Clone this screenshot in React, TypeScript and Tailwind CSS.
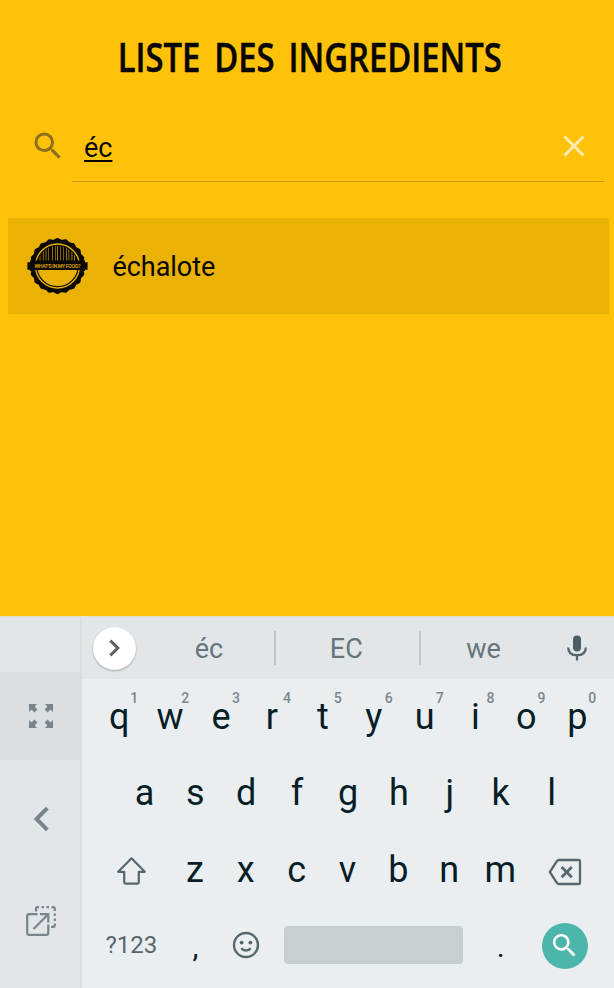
import React from "react";

const ROBOTO = "font-['Roboto','Liberation_Sans',sans-serif]";

const topRow = [
  ["q", "1"], ["w", "2"], ["e", "3"], ["r", "4"], ["t", "5"],
  ["y", "6"], ["u", "7"], ["i", "8"], ["o", "9"], ["p", "0"],
];
const middleRow = ["a", "s", "d", "f", "g", "h", "j", "k", "l"];
const bottomRow = ["z", "x", "c", "v", "b", "n", "m"];

// Scalloped edge of the badge, as alternating bumps round a circle.
function scallops(cx: number, cy: number, inner: number, outer: number, count: number) {
  const steps = count * 8;
  const points: string[] = [];
  for (let i = 0; i < steps; i++) {
    const angle = (i / steps) * Math.PI * 2 - Math.PI / 2;
    const wave = (Math.cos((i / 8) * Math.PI * 2) + 1) / 2;
    const r = inner + (outer - inner) * wave;
    points.push(`${(cx + r * Math.cos(angle)).toFixed(2)},${(cy + r * Math.sin(angle)).toFixed(2)}`);
  }
  return points.join(" ");
}

const bars: [number, number][] = [
  [9.5, 3.2], [13.3, 2.6], [16.5, 2.2], [19.3, 2.2], [22, 3.4], [26, 2], [28.5, 1.8],
  [31, 2], [33.5, 3], [37, 2.2], [39.8, 1.8], [42.2, 2.4], [45.3, 2], [48, 3.5],
];

function Badge() {
  return (
    <svg className="h-[60px] w-[62px] shrink-0" viewBox="0 0 62 60">
      <defs>
        <clipPath id="dome">
          <circle cx="30.5" cy="30" r="20.6" />
        </clipPath>
      </defs>
      <polygon points={scallops(30.5, 30, 26.6, 28, 20)} fill="#0a0800" />
      <circle cx="30.5" cy="30" r="22.7" fill="#e9b204" />
      <g clipPath="url(#dome)">
        {bars.map(([x, w]) => (
          <rect key={x} x={x} y="9" width={w} height="18" fill="#0a0800" />
        ))}
      </g>
      <circle cx="30.5" cy="30" r="20.7" fill="none" stroke="#0a0800" strokeWidth="1.2" />
      <path d="M0.4 26.3H3V24.5H58V26.3H60.6V33.8H58V35H55V34H6V35H3V33.8H0.4Z" fill="#0a0800" />
      <text
        x="30.5"
        y="31.8"
        textAnchor="middle"
        textLength="46"
        lengthAdjust="spacing"
        fontSize="5.2"
        fontWeight="500"
        fill="#e9b204"
        className={ROBOTO}
      >
        WHAT'S IN MY FOOD?
      </text>
    </svg>
  );
}

const SEARCH =
  "M15.5 14h-.79l-.28-.27A6.471 6.471 0 0 0 16 9.5 6.5 6.5 0 1 0 9.5 16c1.61 0 3.09-.59 4.23-1.57l.27.28v.79l5 4.99L20.49 19l-4.99-5zm-6 0C7.01 14 5 11.99 5 9.5S7.01 5 9.5 5 14 7.01 14 9.5 11.99 14 9.5 14z";

function Letter({ char, hint }: { char: string; hint?: string }) {
  return (
    <div className="relative flex h-full w-[50.9px] shrink-0 justify-center pt-[17px] text-[36px] leading-[42px] text-[#071e27]">
      {char}
      {hint && (
        <span className="absolute top-[11px] left-[36.5px] text-[14px] leading-[16px] font-medium text-[#7b878c]">
          {hint}
        </span>
      )}
    </div>
  );
}

function SideRail() {
  return (
    <aside className="flex w-[82px] shrink-0 flex-col border-r-2 border-[#d9dde0] bg-[#e2e6e9]">
      <div className="h-[55px]" />
      <div className="flex h-[88px] items-center justify-center bg-[#dbdfe2] pl-[2px]">
        <svg className="h-[24px] w-[24px]" viewBox="0 0 24 24" fill="#78868b">
          {["", "rotate(90 12 12)", "rotate(180 12 12)", "rotate(270 12 12)"].map((t) => (
            <path key={t} transform={t} d="M0 0H8L5.6 2.6L8.4 5.4L5.4 8.4L2.6 5.6L0 8Z" />
          ))}
        </svg>
      </div>
      <div className="flex h-[118px] items-center justify-center pl-[2px]">
        <svg className="h-[26px] w-[18px]" viewBox="0 0 18 26" fill="none" stroke="#78868b" strokeWidth="4">
          <path d="M15.3 2.2L4.5 13L15.3 23.8" />
        </svg>
      </div>
      <div className="flex h-[85px] items-center justify-center pl-[2px]">
        <svg className="h-[30px] w-[30px]" viewBox="0 0 30 30" fill="none" stroke="#78868b" strokeWidth="2.2">
          <path d="M11.5 8.2H3Q1.2 8.2 1.2 10V27Q1.2 28.9 3 28.9H20.5Q22.3 28.9 22.3 27V18.5" />
          <path d="M14 8.2H22.3V16.5M22 8.5L7.5 23" />
          <path d="M10 5.5V3Q10 1.2 11.5 1.2H13M15.5 1.2H18M20.5 1.2H23M25.5 1.2H27Q28.8 1.2 28.8 3V5M28.8 7.5V10M28.8 12.5V15M28.8 17.5V19Q28.8 20.8 27 20.8H25" />
        </svg>
      </div>
    </aside>
  );
}

function Suggestions() {
  return (
    <div className="flex h-[62px] shrink-0 items-center bg-[#e2e6e9] pl-[11px] text-[27px] leading-[32px] text-[#66757b]">
      <div className="flex h-[43px] w-[43px] shrink-0 items-center justify-center rounded-full bg-white shadow-[0_1px_2px_rgba(0,0,0,0.3)]">
        <svg className="h-[18px] w-[12px]" viewBox="0 0 12 18" fill="none" stroke="#616161" strokeWidth="3">
          <path d="M1.3 1.6L8.8 9L1.3 16.4" />
        </svg>
      </div>
      <div className="w-[138px] shrink-0 pt-[1px] pl-[8px] text-center">éc</div>
      <div className="h-[34px] w-[1.5px] shrink-0 bg-[#c2c8ca]" />
      <div className="w-[143.5px] shrink-0 pt-[1px] pr-[2px] text-center">EC</div>
      <div className="h-[34px] w-[1.5px] shrink-0 bg-[#c2c8ca]" />
      <div className="w-[126px] shrink-0 pt-[1px] text-center">we</div>
      <svg className="ml-[20.5px] h-[26px] w-[20px] shrink-0" viewBox="0 0 20 26">
        <rect x="6" y="0.5" width="8" height="16" rx="4" fill="#4b5d65" />
        <path d="M1.2 12.4C1.2 17.8 5 20.2 10 20.2S18.8 17.8 18.8 12.4M10 20V25.5" fill="none" stroke="#56676e" strokeWidth="2.3" />
      </svg>
    </div>
  );
}

function Keyboard() {
  return (
    <section className="flex h-[372px] shrink-0 border-t border-[#e4e3cd] bg-[#ebeef1]">
      <SideRail />
      <div className="flex min-w-0 flex-1 flex-col">
        <Suggestions />
        <div className="flex h-[76px] shrink-0 pl-[11.8px]">
          {topRow.map(([char, hint]) => (
            <Letter key={char} char={char} hint={hint} />
          ))}
        </div>
        <div className="flex h-[77px] shrink-0 pl-[37px]">
          {middleRow.map((char) => (
            <Letter key={char} char={char} />
          ))}
        </div>
        <div className="flex h-[76.5px] shrink-0">
          <div className="flex w-[87.4px] shrink-0 pt-[24px] pl-[34px]">
            <svg className="h-[30px] w-[31px]" viewBox="0 0 31 30" fill="none" stroke="#56676e" strokeWidth="2.2" strokeLinejoin="round">
              <path d="M15.5 2.3L28.8 15.8H22.8V26.3Q22.8 27.6 21.5 27.6H9.5Q8.2 27.6 8.2 26.3V15.8H2.2Z" />
            </svg>
          </div>
          {bottomRow.map((char) => (
            <Letter key={char} char={char} />
          ))}
          <div className="flex pt-[26px] pl-[22.6px]">
            <svg className="h-[28px] w-[34px] shrink-0" viewBox="0 0 34 28" fill="none" stroke="#56676e" strokeWidth="2.3">
              <path d="M11 2H30.5Q32 2 32 3.5V24.5Q32 26 30.5 26H11Q9.6 26 8.9 24.9L1.8 14L8.9 3.1Q9.6 2 11 2Z" />
              <path d="M13.6 9L23.8 19.2M23.8 9L13.6 19.2" strokeWidth="2.8" />
            </svg>
          </div>
        </div>
        <div className="flex min-h-0 flex-1 text-[#56676e]">
          <div className="w-[88px] shrink-0 pt-[22px] pl-[23.5px] text-[24px] leading-[28px]">?123</div>
          <div className="w-[50.8px] shrink-0 pt-[20px] text-center text-[30px] leading-[36px] text-[#071e27]">,</div>
          <div className="w-[63px] shrink-0 pt-[22px] pl-[11px]">
            <svg className="h-[28px] w-[28px]" viewBox="0 0 28 28">
              <circle cx="14" cy="14" r="12" fill="none" stroke="#56676e" strokeWidth="2.4" />
              <circle cx="9.6" cy="11.6" r="1.9" fill="#56676e" />
              <circle cx="18.4" cy="11.6" r="1.9" fill="#56676e" />
              <path d="M9.3 17.2Q11 19.5 14 19.5T18.7 17.2" fill="none" stroke="#56676e" strokeWidth="2.3" />
            </svg>
          </div>
          <div className="mt-[17px] h-[38px] w-[179px] shrink-0 rounded-[4px] bg-[#c9ced1]" />
          <div className="w-[76px] shrink-0 pt-[20px] text-center text-[30px] leading-[36px] text-[#071e27]">.</div>
          <div className="mt-[14px] ml-[3px] flex h-[46px] w-[46px] shrink-0 items-center justify-center rounded-full bg-[#4db6ac]">
            <svg className="h-[31px] w-[31px]" viewBox="0 0 24 24" fill="white">
              <path d={SEARCH} />
            </svg>
          </div>
        </div>
      </div>
    </section>
  );
}

export default function App() {
  return (
    <div className={`flex h-[988px] w-[614px] flex-col overflow-hidden bg-[#ffc20a] ${ROBOTO}`}>
      <h1 className="h-[112px] pt-[29px] text-center font-['Open_Sans','Noto_Sans',sans-serif] text-[40px] leading-[56px] font-semibold whitespace-nowrap text-[#080600]">
        <span className="inline-block origin-center translate-x-[2.5px] scale-x-[0.82] [word-spacing:6.5px] [-webkit-text-stroke:0.5px_#080600]">LISTE DES INGREDIENTS</span>
      </h1>
      <div className="flex h-[70px] shrink-0 pr-[10px] pl-[30px]">
        <svg className="mt-[16px] h-[36px] w-[36px] shrink-0" viewBox="0 0 24 24" fill="#8d701c">
          <path d={SEARCH} />
        </svg>
        <div className="ml-[6px] flex flex-1 justify-between border-b border-[#c99b0c] pl-[12px]">
          <div className="pt-[19.5px] text-[27px] leading-[32px] text-[#080600]">
            <span className="underline decoration-[1.6px] underline-offset-[2.6px] [text-decoration-skip-ink:none]">éc</span>
          </div>
          <svg className="mt-[23px] mr-[19px] h-[22px] w-[22px]" viewBox="0 0 22 22" stroke="#ffeab0" strokeWidth="3">
            <path d="M1.5 1.5L20.5 20.5M20.5 1.5L1.5 20.5" />
          </svg>
        </div>
      </div>
      <div className="mt-[36px] mr-[5.5px] ml-[7.5px] flex h-[96px] shrink-0 items-center bg-[#e9b204] pl-[19.5px] text-[27px] leading-[32px] text-[#080600]">
        <Badge />
        <span className="pt-[2px] pl-[23.5px] tracking-[-0.05px]">échalote</span>
      </div>
      <div className="min-h-0 flex-1" />
      <Keyboard />
    </div>
  );
}
